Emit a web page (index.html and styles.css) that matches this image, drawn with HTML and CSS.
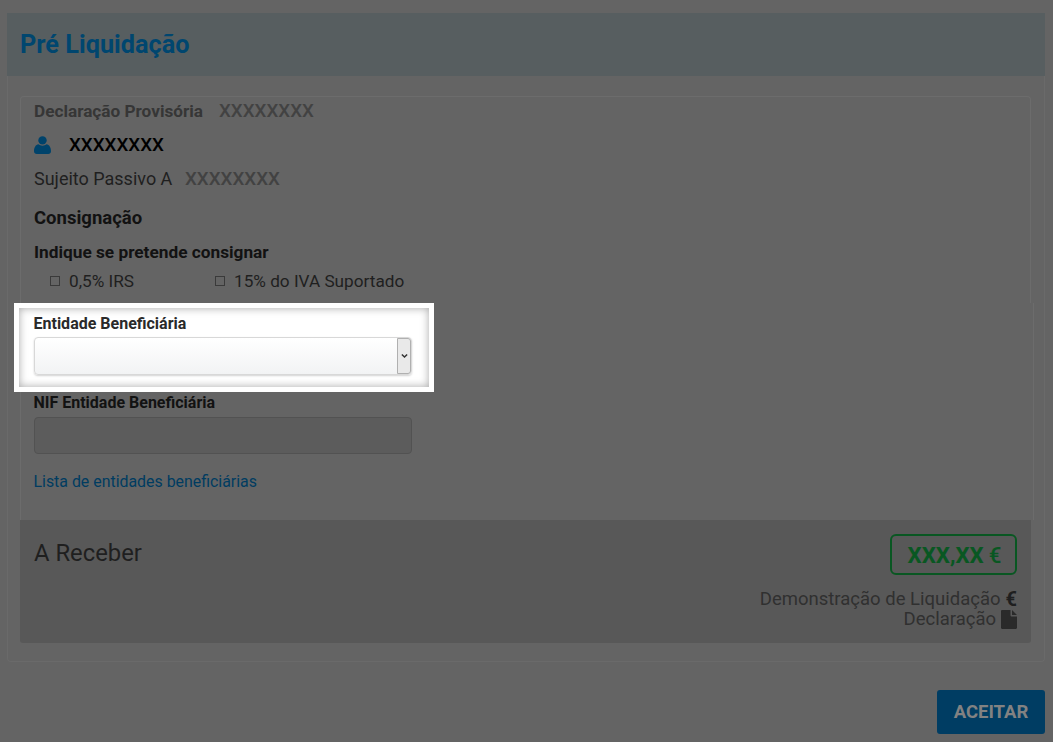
FILE: index.html
```html
<!DOCTYPE html>
<html lang="pt">
<head>
<meta charset="utf-8">
<title>Pré Liquidação</title>
<link rel="stylesheet" href="styles.css">
</head>
<body>
<main class="page">
  <header class="head"><h1 class="title">Pré Liquidação</h1></header>
  <section class="outer">
    <div class="inner-top">
      <div class="row row-decl"><strong class="decl-label">Declaração Provisória</strong><span class="mask">XXXXXXXX</span></div>
      <div class="row row-name">
        <svg class="user-icon" viewBox="0 0 17 18" aria-hidden="true"><circle cx="8.500" cy="4.400" r="4.200"/><path d="M0 15.200C0 11.600 1.800 8.600 4.400 8.300 5.600 9.200 7 9.700 8.500 9.700s2.900-.5 4.100-1.400C15.200 8.600 17 11.600 17 15.200 17 17 15.800 18 14.200 18H2.800C1.200 18 0 17 0 15.200Z"/></svg>
        <span class="name">XXXXXXXX</span>
      </div>
      <div class="row row-sp"><span class="sp-label">Sujeito Passivo A</span><span class="mask">XXXXXXXX</span></div>
      <h2 class="section-title">Consignação</h2>
      <div class="ask">Indique se pretende consignar</div>
      <div class="checks">
        <label class="check check-a"><span class="box"></span>0,5% IRS</label>
        <label class="check"><span class="box"></span>15% do IVA Suportado</label>
      </div>
    </div>
    <div class="inner-bottom">
      <div class="spot">
        <label class="field-label">Entidade Beneficiária</label>
        <div class="select">
          <span class="select-btn"><svg class="chev" viewBox="0 0 8 6" aria-hidden="true"><path d="M1 1.200 4 4.200 7 1.200"/></svg></span>
        </div>
      </div>
      <div class="nif">
        <label class="field-label">NIF Entidade Beneficiária</label>
        <div class="input"></div>
        <a class="link" href="#">Lista de entidades beneficiárias</a>
      </div>
    </div>
    <div class="receive">
      <div class="receive-title">A Receber</div>
      <div class="receive-side">
        <div class="amount">XXX,XX <span class="euro">€</span></div>
        <div class="doc-links">
          <div class="doc">Demonstração de Liquidação <b class="doc-euro">€</b></div>
          <div class="doc doc-second">Declaração
            <svg class="file-icon" viewBox="0 0 16 19" aria-hidden="true"><path d="M0 1.200C0 .5.500 0 1.200 0H9.500V5.200C9.500 6 10 6.500 10.800 6.500H16V17.800C16 18.500 15.500 19 14.800 19H1.200C.5 19 0 18.500 0 17.800ZM11 0 16 5H11Z"/></svg>
          </div>
        </div>
      </div>
    </div>
  </section>
  <div class="actions"><button class="accept" type="button">ACEITAR</button></div>
</main>
</body>
</html>
```
FILE: styles.css
```css
* { box-sizing: border-box; }
html, body { margin: 0; height: 100%; }
body { background: #646464; font-family: Roboto, "Liberation Sans", sans-serif; color: #1f1f1f; overflow: hidden; }
.page { padding: 13px 8px 0 7px; height: 742px; }
.head { height: 63px; background: #575e60; display: flex; align-items: center; padding-left: 13px; }
.title { margin: 0; font-size: 25.300px; font-weight: 700; color: #00466f; line-height: 1; }
.outer { height: 586px; border: 1px solid #6a6a6a; border-top: 0; border-radius: 0 0 4px 4px; padding: 20px 13px 0 12px; }
.inner-top { height: 207px; border: 1px solid #6c6c6c; border-bottom: 0; border-radius: 4px 4px 0 0; padding: 0 13px; }
.inner-bottom { height: 217px; margin-right: -3px; border: 1px solid #6c6c6c; border-width: 0 1px; padding: 0 13px; }
.row { display: flex; align-items: center; }
.row-decl { height: 28px; padding-bottom: 1px; }
.decl-label { font-weight: 700; color: #363636; width: 185px; font-size: 17.200px; }
.mask { font-size: 18.800px; color: #424242; font-weight: 500; }
.row-name { height: 39px; }
.user-icon { width: 17px; height: 18px; fill: #00436b; display: block; }
.name { font-size: 18.800px; font-weight: 500; color: #000; margin-left: 18px; }
.row-sp { height: 29px; }
.sp-label { font-size: 18px; color: #1f1f1f; width: 151px; }
.section-title { margin: 0; height: 49px; font-size: 18.500px; font-weight: 700; color: #121212; line-height: 50px; }
.ask { height: 21px; font-size: 17.250px; font-weight: 700; color: #121212; line-height: 21px; }
.checks { display: flex; height: 37px; padding-bottom: 2px; align-items: center; padding-left: 16px; font-size: 17.200px; color: #1f1f1f; }
.check { display: flex; align-items: center; }
.check-a { width: 165px; }
.box { width: 10px; height: 10px; border: 1px solid #3a3a3a; margin-right: 9px; }
.spot { margin: 0 0 0 -20px; width: 420px; height: 89px; background: #fff; border: 5px solid #fff; box-shadow: inset 0 0 8px rgba(0,0,0,.35); padding: 4px 17px 0 14.500px; position: relative; }
.field-label { display: block; font-size: 16px; font-weight: 700; line-height: 18px; color: #2a2a2a; }
.spot .field-label { height: 25px; line-height: 23px; }
.select { height: 38px; margin-left: .5px; border: 1px solid #d8d8d8; border-radius: 4px; background: linear-gradient(#fff, #f2f3f4); box-shadow: 0 1px 2px rgba(0,0,0,.18); display: flex; justify-content: flex-end; }
.select-btn { width: 14px; background: #e9e9e9; border: 1px solid #b0b0b0; border-radius: 0 3px 3px 0; display: flex; align-items: center; justify-content: center; }
.chev { width: 7px; height: 6px; fill: none; stroke: #333; stroke-width: 1.700; }
.nif .field-label { height: 25px; line-height: 21px; margin-left: -.5px; color: #121212; }
.input { width: 378px; height: 37px; background: #5c5c5c; border: 1px solid #525252; border-radius: 4px; }
.link { display: block; margin-top: 18px; font-size: 15.900px; color: #003c61; text-decoration: none; line-height: 20px; margin-left: -.5px; }
.receive { height: 123px; background: #585858; border-radius: 0 0 3px 3px; display: flex; justify-content: space-between; padding: 14px 14px 0 14px; }
.receive-title { font-size: 23.800px; color: #1f1f1f; line-height: 39px; }
.receive-side { display: flex; flex-direction: column; align-items: flex-end; }
.amount { width: 127px; height: 41px; border: 2px solid #095722; border-radius: 6px; display: flex; align-items: center; justify-content: center; gap: 5px; padding-left: 2px; font-size: 22.300px; font-weight: 700; color: #095722; }
.euro { font-weight: 500; }
.doc-links { margin-top: 14px; text-align: right; font-size: 18.500px; line-height: 21px; color: #303030; }
.doc { display: flex; justify-content: flex-end; align-items: center; gap: 5px; height: 21px; }
.doc-second { margin-top: -1px; }
.doc-euro { color: #1f1f1f; font-weight: 700; font-size: 20px; }
.file-icon { width: 16px; height: 19px; fill: #2a2a2a; }
.actions { display: flex; justify-content: flex-end; margin-top: 28px; }
.accept { width: 108px; height: 44px; border: 0; border-radius: 3px; background: #003d63; color: #828282; font: 700 18.500px Roboto, sans-serif; }
```
